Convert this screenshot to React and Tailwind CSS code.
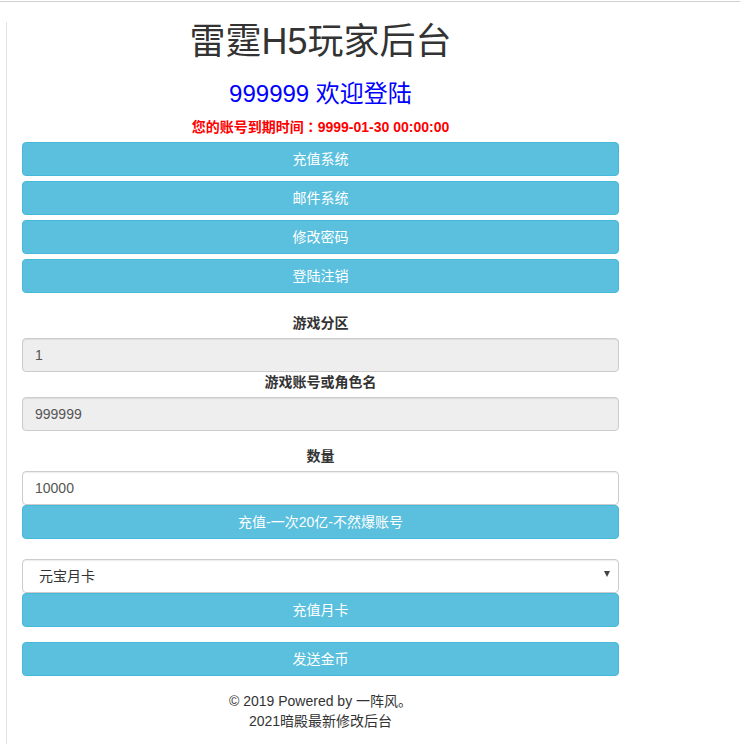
const FONT = { fontFamily: '"Liberation Sans", Arial, "Noto Sans CJK SC", sans-serif' };
const FONT_TC = { fontFamily: '"Liberation Sans", Arial, "Noto Sans CJK TC", sans-serif' };

const MENU = ['充值系统', '邮件系统', '修改密码', '登陆注销'];

function InfoButton({ children, className = '' }) {
  return (
    <button
      type="button"
      className={`w-full h-[34px] rounded-[4px] border border-[#46b8da] bg-[#5bc0de] text-[14px] text-white leading-[20px] ${className}`}
    >
      {children}
    </button>
  );
}

function Field({ value, disabled, className = '' }) {
  return (
    <input
      readOnly
      value={value}
      className={`block w-full h-[34px] rounded-[4px] border border-[#ccc] px-3 text-[14px] text-[#555] shadow-[inset_0_1px_1px_rgba(0,0,0,0.075)] outline-none ${
        disabled ? 'bg-[#eee]' : 'bg-white'
      } ${className}`}
    />
  );
}

function Label({ children, className = '' }) {
  return (
    <label className={`block text-center text-[14px] font-bold leading-[20px] text-[#333] ${className}`}>
      {children}
    </label>
  );
}

export default function App() {
  return (
    <div className="min-h-screen bg-white pt-px" style={FONT}>
      <div className="border-t border-[#d0d0d0]">
        <div className="ml-[6px] min-h-[742px] border-l border-[#e3e3e3] pl-[15px]">
          <div className="w-[597px] text-[#333]">
            <h1 className="mt-5 text-center text-[36px] leading-[40px] font-normal">雷霆H5玩家后台</h1>
            <h3 className="mt-[19px] text-center text-[24px] leading-[26px] text-[#0000ff]">999999 欢迎登陆</h3>
            <p className="mt-[10px] text-center text-[14px] font-bold leading-[20px] text-[#ff0000]" style={FONT_TC}>
              您的账号到期时间：9999-01-30 00:00:00
            </p>

            <div className="mt-[5px] flex flex-col gap-[5px]">
              {MENU.map((m) => (
                <InfoButton key={m}>{m}</InfoButton>
              ))}
            </div>

            <Label className="mt-5">游戏分区</Label>
            <Field value="1" disabled className="mt-[5px]" />
            <Label>游戏账号或角色名</Label>
            <Field value="999999" disabled className="mt-[5px]" />

            <Label className="mt-[15px]">数量</Label>
            <Field value="10000" className="mt-[5px]" />
            <InfoButton>充值-一次20亿-不然爆账号</InfoButton>

            <div className="relative mt-5">
              <select
                defaultValue="yb"
                className="block w-full h-[34px] appearance-none rounded-[4px] border border-[#ccc] bg-white pl-4 pr-8 text-[14px] text-[#333] shadow-[inset_0_1px_1px_rgba(0,0,0,0.075)] outline-none"
              >
                <option value="yb">元宝月卡</option>
              </select>
              <span className="pointer-events-none absolute right-[9px] top-[12px] h-0 w-0 border-x-[3px] border-t-[6px] border-x-transparent border-t-[#444]" />
            </div>
            <InfoButton>充值月卡</InfoButton>

            <InfoButton className="mt-[15px]">发送金币</InfoButton>

            <div className="mt-[15px] text-center text-[14px] leading-[20px] text-[#333]">
              <p>© 2019 Powered by 一阵风。</p>
              <p>2021暗殿最新修改后台</p>
            </div>
          </div>
        </div>
      </div>
    </div>
  );
}
